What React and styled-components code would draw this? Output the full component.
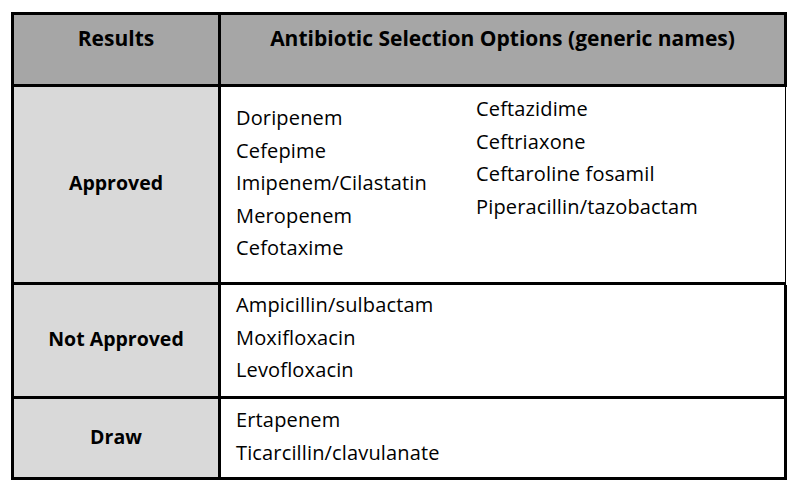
import styled, { createGlobalStyle } from 'styled-components';

const GlobalStyle = createGlobalStyle`
  html, body {
    margin: 0;
    padding: 0;
    background: #ffffff;
  }
  body {
    font-family: "Open Sans", Lato, sans-serif;
    color: #000;
  }
`;

const approvedLeft = ['Doripenem', 'Cefepime', 'Imipenem/Cilastatin', 'Meropenem', 'Cefotaxime'];
const approvedRight = ['Ceftazidime', 'Ceftriaxone', 'Ceftaroline fosamil', 'Piperacillin/tazobactam'];
const notApproved = ['Ampicillin/sulbactam', 'Moxifloxacin', 'Levofloxacin'];
const draw = ['Ertapenem', 'Ticarcillin/clavulanate'];

const App = () => {
  return (
    <>
      <GlobalStyle />
      <Page>
        <Table>
          <Row $height={69} $header>
            <HeadCell>Results</HeadCell>
            <HeadCell>Antibiotic Selection Options (generic names)</HeadCell>
          </Row>
          <Row $height={195} $thinRight>
            <LabelCell>Approved</LabelCell>
            <ContentCell>
              <DrugList $top={15}>
                {approvedLeft.map((d) => (
                  <li key={d}>{d}</li>
                ))}
              </DrugList>
              <DrugList $top={6}>
                {approvedRight.map((d) => (
                  <li key={d}>{d}</li>
                ))}
              </DrugList>
            </ContentCell>
          </Row>
          <Row $height={111}>
            <LabelCell>Not Approved</LabelCell>
            <ContentCell>
              <DrugList $top={4}>
                {notApproved.map((d) => (
                  <li key={d}>{d}</li>
                ))}
              </DrugList>
            </ContentCell>
          </Row>
          <Row $height={78}>
            <LabelCell>Draw</LabelCell>
            <ContentCell>
              <DrugList $top={5}>
                {draw.map((d) => (
                  <li key={d}>{d}</li>
                ))}
              </DrugList>
            </ContentCell>
          </Row>
        </Table>
      </Page>
    </>
  );
};

export default App;

const Page = styled.div`
  width: 797px;
  height: 494px;
  padding: 12px 0 0 11px;
  box-sizing: border-box;
`;

const Table = styled.div`
  width: 776px;
  display: flex;
  flex-direction: column;
  border-top: 3px solid #000;
`;

const Row = styled.div`
  display: grid;
  grid-template-columns: 207px 1fr;
  height: ${(p) => p.$height}px;
  border-left: 3px solid #000;
  border-bottom: 3px solid #000;
  border-right: ${(p) => (p.$thinRight ? '1px' : '3px')} solid #000;
  margin-right: ${(p) => (p.$thinRight ? '1px' : '0')};
  background: ${(p) => (p.$header ? '#a6a6a6' : '#fff')};
`;

const HeadCell = styled.div`
  font-weight: 700;
  font-size: 21px;
  line-height: 32px;
  text-align: center;
  padding-top: 7px;

  &:first-child {
    border-right: 3px solid #000;
  }
`;

const LabelCell = styled.div`
  background: #d9d9d9;
  border-right: 3px solid #000;
  display: flex;
  align-items: center;
  justify-content: center;
  font-weight: 700;
  font-size: 19.5px;
  padding-bottom: 4px;
`;

const ContentCell = styled.div`
  display: grid;
  grid-template-columns: 240px auto;
  align-items: start;
  padding-left: 15px;
`;

const DrugList = styled.ul`
  list-style: none;
  margin: 0;
  padding: ${(p) => p.$top}px 0 0;
  font-size: 20px;
  line-height: 32.6px;
  letter-spacing: 0.15px;

  li {
    white-space: nowrap;
  }
`;
